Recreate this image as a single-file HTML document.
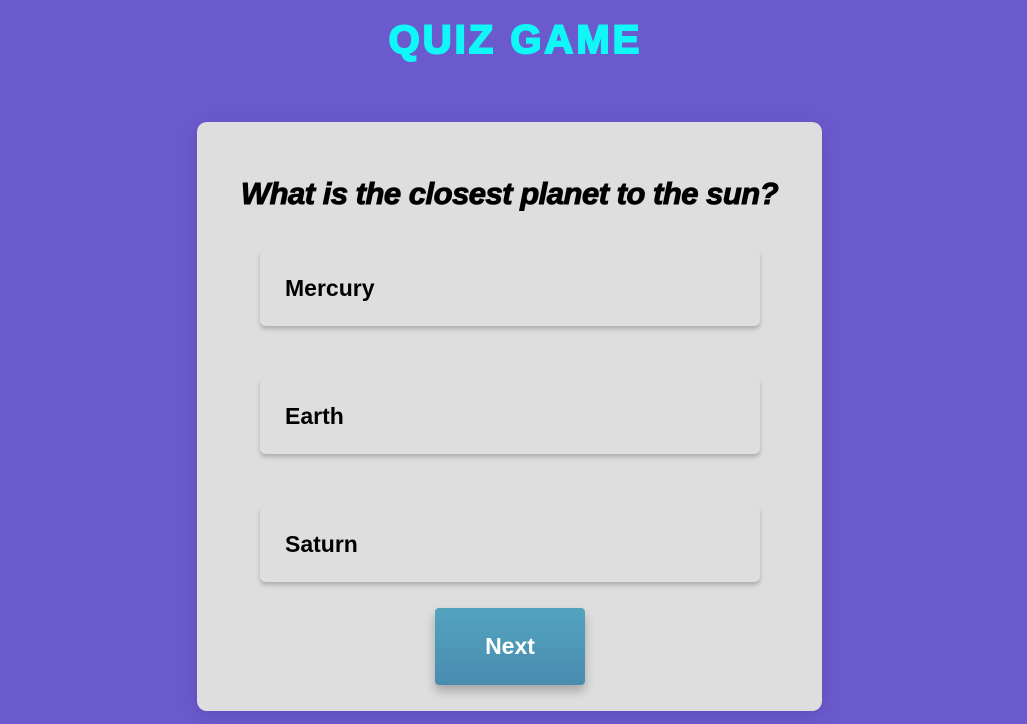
<!DOCTYPE html>
<html><head><meta charset="utf-8"><style>
html,body{margin:0;width:1027px;height:724px;overflow:hidden;background:#6b5ace;font-family:"Liberation Sans",sans-serif;}
h1{position:absolute;top:15px;left:2px;width:1027px;text-align:center;margin:0;color:#10f7f7;font-size:40px;font-weight:900;letter-spacing:3px;line-height:50px;-webkit-text-stroke:2px #10f7f7;}
.card{position:absolute;left:197px;top:122px;width:625px;height:589px;background:#dedede;border-radius:10px;box-shadow:0 4px 20px rgba(0,0,0,.12);}
.q{position:absolute;top:54px;left:0;width:625px;text-align:center;font-size:31px;font-weight:bold;font-style:italic;color:#000;letter-spacing:-0.5px;-webkit-text-stroke:1px #000;}
.opt{position:absolute;left:63px;width:500px;height:76px;background:#dedede;border-radius:6px;box-shadow:0 3px 5px rgba(0,0,0,.22);font-size:23px;font-weight:bold;line-height:76px;box-sizing:border-box;padding-left:25px;}
.btn{position:absolute;left:238px;top:486px;width:150px;height:77px;background:linear-gradient(#52a3bf,#4a8cb0);border-radius:4px;box-shadow:0 6px 10px rgba(0,0,0,.25);color:#fff;font-size:23px;font-weight:bold;text-align:center;line-height:77px;}
</style></head><body>
<h1>QUIZ GAME</h1>
<div class="card">
<div class="q">What is the closest planet to the sun?</div>
<div class="opt" style="top:128px">Mercury</div>
<div class="opt" style="top:256px">Earth</div>
<div class="opt" style="top:384px">Saturn</div>
<div class="btn">Next</div>
</div>
</body></html>
